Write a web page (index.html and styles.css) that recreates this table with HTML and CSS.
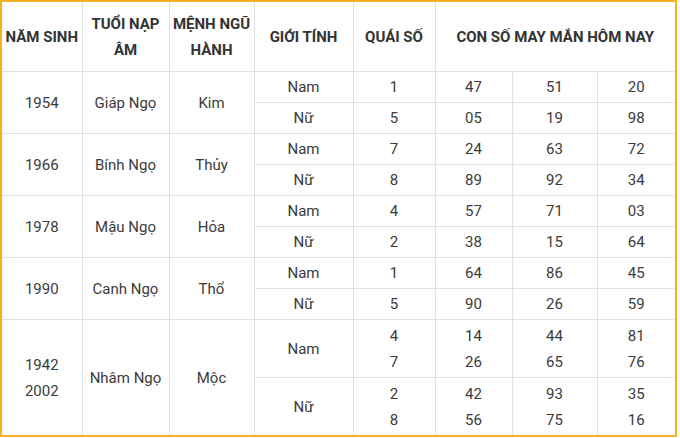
FILE: index.html
```html
<!DOCTYPE html>
<html>
<head>
<meta charset="utf-8">
<link rel="stylesheet" href="styles.css">
</head>
<body>
<div class="frame">
<table class="lucky">
<colgroup>
<col class="c1"><col class="c2"><col class="c3"><col class="c4"><col class="c5"><col class="c6"><col class="c7"><col class="c8">
</colgroup>
<thead>
<tr class="head">
<th>NĂM SINH</th><th>TUỔI NẠP ÂM</th><th>MỆNH NGŨ HÀNH</th><th>GIỚI TÍNH</th><th>QUÁI SỐ</th><th colspan="3">CON SỐ MAY MẮN HÔM NAY</th>
</tr>
</thead>
<tbody>
<tr class="r"><td rowspan="2">1954</td><td rowspan="2">Giáp Ngọ</td><td rowspan="2">Kim</td><td>Nam</td><td>1</td><td>47</td><td>51</td><td>20</td></tr>
<tr class="r"><td>Nữ</td><td>5</td><td>05</td><td>19</td><td>98</td></tr>
<tr class="r"><td rowspan="2">1966</td><td rowspan="2">Bính Ngọ</td><td rowspan="2">Thủy</td><td>Nam</td><td>7</td><td>24</td><td>63</td><td>72</td></tr>
<tr class="r"><td>Nữ</td><td>8</td><td>89</td><td>92</td><td>34</td></tr>
<tr class="r"><td rowspan="2">1978</td><td rowspan="2">Mậu Ngọ</td><td rowspan="2">Hỏa</td><td>Nam</td><td>4</td><td>57</td><td>71</td><td>03</td></tr>
<tr class="r"><td>Nữ</td><td>2</td><td>38</td><td>15</td><td>64</td></tr>
<tr class="r"><td rowspan="2">1990</td><td rowspan="2">Canh Ngọ</td><td rowspan="2">Thổ</td><td>Nam</td><td>1</td><td>64</td><td>86</td><td>45</td></tr>
<tr class="r"><td>Nữ</td><td>5</td><td>90</td><td>26</td><td>59</td></tr>
<tr class="r2"><td rowspan="2">1942<br>2002</td><td rowspan="2">Nhâm Ngọ</td><td rowspan="2">Mộc</td><td>Nam</td><td>4<br>7</td><td>14<br>26</td><td>44<br>65</td><td>81<br>76</td></tr>
<tr class="r2"><td>Nữ</td><td>2<br>8</td><td>42<br>56</td><td>93<br>75</td><td>35<br>16</td></tr>
</tbody>
</table>
</div>
</body>
</html>
```

FILE: styles.css
```css
html, body {
  margin: 0;
  padding: 0;
  background: #fff;
}
.frame {
  width: 673px;
  border: 2px solid #f4b223;
  font-family: Roboto, "Liberation Sans", Arial, sans-serif;
  color: #3b3b3b;
}
.lucky {
  width: 673px;
  border-collapse: collapse;
  table-layout: fixed;
  border-style: hidden;
}
.c1 { width: 80px; }
.c2 { width: 87px; }
.c3 { width: 85px; }
.c4 { width: 99px; }
.c5 { width: 82px; }
.c6 { width: 77px; }
.c7 { width: 85px; }
.c8 { width: 78px; }
.lucky th,
.lucky td {
  border: 1px solid #e2e2e2;
  padding: 0;
  text-align: center;
  vertical-align: middle;
  font-size: 15px;
  line-height: 26px;
}
.lucky th {
  font-weight: 700;
  color: #333;
}
.head th { height: 69px; }
.r td { height: 30px; }
.r2 td { height: 57px; }
```
